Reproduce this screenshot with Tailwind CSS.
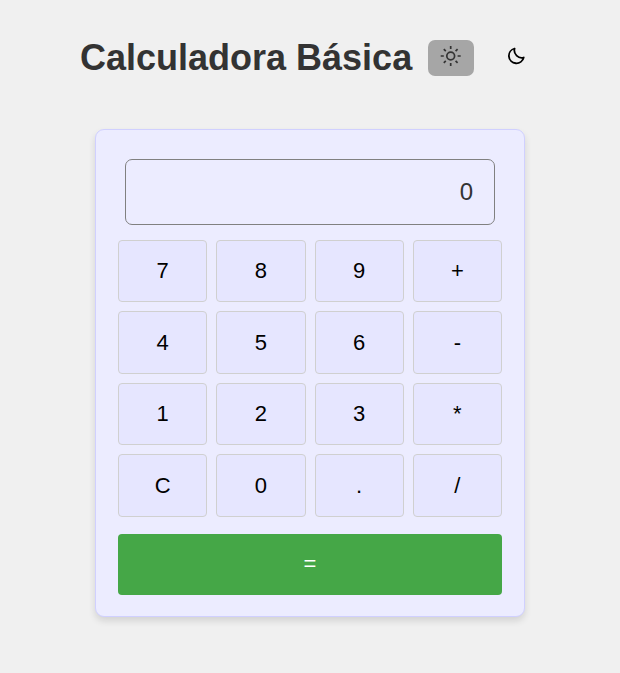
<!DOCTYPE html>
<html lang="es">
<head>
<meta charset="utf-8">
<title>Calculadora Básica</title>
<script src="https://cdn.jsdelivr.net/npm/@tailwindcss/browser@4"></script>
</head>
<body class="bg-[#f0f0f0] font-['Liberation_Sans',Arial,sans-serif] min-h-screen flex flex-col items-center pt-[37px]">
<header class="flex items-center h-[42px] w-[460px]">
<h1 class="text-[36px] leading-[42px] font-bold text-[#333] whitespace-nowrap w-[348px]">Calculadora Básica</h1>
<button class="w-[46px] h-[36px] rounded-[7px] bg-[#a6a6a6] flex items-center justify-center text-[#333]" aria-label="Modo claro">
<svg class="w-[22px] h-[22px] -mt-[4px]" viewBox="0 0 22 22" fill="none" stroke="currentColor" stroke-width="1.7"><circle cx="10.7" cy="11" r="3.9"/><path d="M10.7 1v3.1M10.7 17.9v3.1M.7 11h3.1M17.6 11h3.1M3.8 4.1l2 2M15.6 15.9l2 2M3.8 17.9l2-2M15.6 6.1l2-2"/></svg>
</button>
<button class="w-[46px] h-[36px] ml-[18.6px] flex items-center justify-center text-black" aria-label="Modo oscuro">
<svg class="w-[18px] h-[18px] -mt-[4px]" viewBox="0 0 18 18" fill="none" stroke="currentColor" stroke-width="1.8" stroke-linejoin="round"><path d="M7.6 1.5A7.5 7.5 0 1 0 16.7 10.5C11.4 12.2 6.1 6.9 7.6 1.5Z"/></svg>
</button>
</header>
<main class="mt-[50px] w-[430px] h-[488px] rounded-[9px] border border-[#d0d0ff] bg-[#ececff] shadow-[0_4px_7px_rgba(0,0,0,0.12)] px-[22px] pt-[29px] text-[22px]">
<div class="mx-[7px] h-[66px] rounded-[7px] border border-[#808080] flex items-center justify-end pr-[21px] text-[24px] text-[#333]">0</div>
<div class="mt-[14.8px] grid grid-cols-4 gap-[9px] h-[277px] grid-rows-4 text-black *:border *:border-[#d0d0d0] *:rounded-[4px] *:bg-[#e6e6ff] *:pb-[1px]">
<button>7</button><button>8</button><button>9</button><button>+</button>
<button>4</button><button>5</button><button>6</button><button>-</button>
<button>1</button><button>2</button><button>3</button><button>*</button>
<button>C</button><button>0</button><button>.</button><button>/</button>
</div>
<button class="mt-[17.2px] w-full h-[61px] rounded-[4px] bg-[#45a747] text-white block pb-[2px]">=</button>
</main>
</body>
</html>
